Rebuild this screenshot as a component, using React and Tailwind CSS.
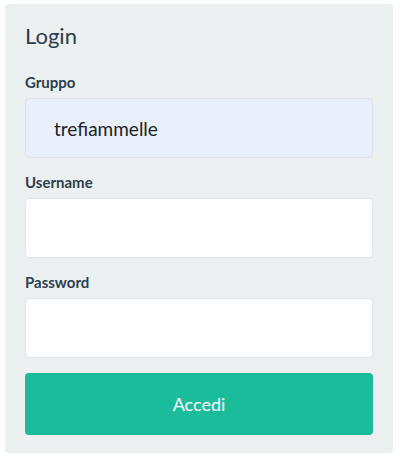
import React from "react";

const Field = ({ label, value, filled, last }) => (
  <div className={last ? "" : "mb-[14px]"}>
    <label className="block text-[15px] font-bold text-[#2c3e50] leading-[20px] mb-[6px]">
      {label}
    </label>
    <input
      type="text"
      defaultValue={value}
      readOnly
      className={
        "block w-full h-[60px] rounded-[4px] border border-[#dde3ea] px-[28px] text-[19px] text-[#222] outline-none " +
        (filled ? "bg-[#e8f0fe]" : "bg-white")
      }
      style={{ fontFamily: "Lato, sans-serif" }}
    />
  </div>
);

const App = () => {
  return (
    <div className="min-h-[460px] bg-white pt-[4px] pl-[5px]" style={{ fontFamily: "Lato, 'Open Sans', sans-serif" }}>
      <div className="w-[388px] bg-[#ecf0f1] rounded-[4px] px-[20px] pt-[18px] pb-[18px]">
        <h1 className="text-[22px] leading-[28px] text-[#2c3e50] mb-[22px]">Login</h1>
        <Field label="Gruppo" value="trefiammelle" filled />
        <Field label="Username" value="" />
        <Field label="Password" value="" last />
        <button className="mt-[15px] w-full h-[62px] rounded-[4px] bg-[#1abc9c] text-white text-[18px]">
          Accedi
        </button>
      </div>
    </div>
  );
};

export default App;
